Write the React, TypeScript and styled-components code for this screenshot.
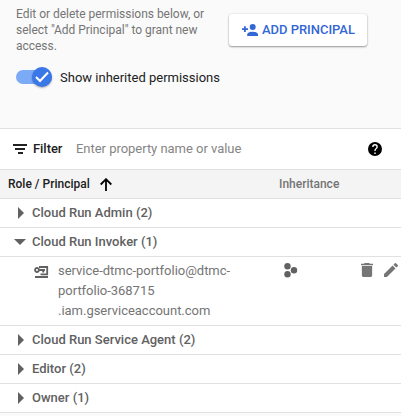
import React from "react";
import styled, { createGlobalStyle } from "styled-components";

const GlobalStyle = createGlobalStyle`
  * { box-sizing: border-box; }
  body { margin: 0; background: #fafafa; font-family: Roboto, "Liberation Sans", sans-serif; overflow: hidden; }
`;

const Page = styled.main`
  width: 401px;
  height: 416px;
  background: #fafafa;
  overflow: hidden;
`;

const Header = styled.header`
  display: flex;
  height: 128px;
  padding: 6px 0 0 16px;
`;

const Intro = styled.div`
  width: 212px;
`;

const Description = styled.p`
  margin: 0;
  font-size: 12px;
  line-height: 16px;
  letter-spacing: -0.02px;
  color: #757575;
  white-space: nowrap;
`;

const ToggleRow = styled.label`
  display: flex;
  align-items: center;
  gap: 8px;
  height: 20px;
  margin-top: 13px;
  font-size: 13px;
  color: #212121;
  white-space: nowrap;
`;

const Track = styled.span`
  display: flex;
  align-items: center;
  justify-content: flex-end;
  flex: none;
  width: 36px;
  height: 14px;
  border-radius: 7px;
  background: #7baaf7;
`;

const Thumb = styled.span`
  display: flex;
  align-items: center;
  justify-content: center;
  width: 20px;
  height: 20px;
  border-radius: 50%;
  background: #3b78e7;
  box-shadow: 0 1px 2px rgba(0, 0, 0, 0.3);
`;

const AddButton = styled.button`
  display: flex;
  align-items: center;
  width: 138px;
  height: 32px;
  margin: 8px 0 0 1px;
  padding: 0 0 0 13px;
  gap: 4px;
  border: 0;
  border-radius: 3px;
  background: #fff;
  box-shadow: 0 1px 2px rgba(0, 0, 0, 0.38), 0 0 2px rgba(0, 0, 0, 0.12);
  color: #3367d6;
  font: 500 13px/16px Roboto, sans-serif;
  letter-spacing: -0.03px;
  white-space: nowrap;
`;

const FilterBar = styled.div`
  display: flex;
  align-items: center;
  height: 41px;
  padding: 0 19px 1px 13px;
  border-top: 1px solid #e0e0e0;
  background: #fff;
  font-size: 13px;
`;

const FilterLabel = styled.span`
  width: 43px;
  margin-left: 6px;
  font-weight: 500;
  letter-spacing: -0.05px;
  color: #212121;
`;

const Placeholder = styled.span`
  flex: 1;
  letter-spacing: -0.03px;
  color: #858585;
`;

const TableHead = styled.div`
  display: grid;
  grid-template-columns: 279px 1fr;
  align-items: center;
  height: 29px;
  border-top: 1px solid #e0e0e0;
  background: #f4f4f4;
  font-size: 12px;
  font-weight: 500;
  color: #757575;
`;

const SortedHeading = styled.span`
  display: flex;
  align-items: center;
  gap: 10px;
  padding-left: 8px;
  color: #212121;
`;

const Group = styled.div`
  display: flex;
  align-items: center;
  height: 29px;
  padding-bottom: 1px;
  border-top: 1px solid #e0e0e0;
  background: #fff;
  font-size: 13px;
  font-weight: 500;
  color: #616161;
`;

const Caret = styled.span<{ $open: boolean }>`
  display: flex;
  justify-content: center;
  width: 12px;
  margin: 0 6px 0 14px;
  padding-left: ${(p) => (p.$open ? 0 : 2)}px;
`;

const Member = styled.div`
  display: flex;
  align-items: flex-start;
  height: 69px;
  padding: 4px 0 0 34px;
  border-top: 1px solid #e0e0e0;
  background: #fff;
`;

const Email = styled.div`
  width: 226px;
  margin-left: 9px;
  font-size: 13px;
  line-height: 20px;
  letter-spacing: -0.02px;
  color: #757575;
`;

const Icon = styled.svg<{ $top?: number }>`
  display: block;
  flex: none;
  margin-top: ${(p) => p.$top ?? 0}px;
`;

const Actions = styled.div`
  display: flex;
  gap: 11px;
  margin-left: 63px;
`;

const Footer = styled.footer`
  height: 4px;
  border-top: 1px solid #e0e0e0;
  background: #fafafa;
`;

function RoleGroup({ name, count, open = false }: { name: string; count: number; open?: boolean }) {
  return (
    <Group>
      <Caret $open={open}>
        {open ? (
          <Icon width="12" height="6" viewBox="0 0 12 6"><path d="M0 0h12L6 6z" fill="#616161" /></Icon>
        ) : (
          <Icon width="6" height="12" viewBox="0 0 6 12"><path d="M0 0v12l6-6z" fill="#616161" /></Icon>
        )}
      </Caret>
      {name} ({count})
    </Group>
  );
}

export default function App() {
  return (
    <Page>
      <GlobalStyle />
      <Header>
        <Intro>
          <Description>
            Edit or delete permissions below, or<br />select "Add Principal" to grant new<br />access.
          </Description>
          <ToggleRow>
            <Track>
              <Thumb>
                <Icon width="14" height="12" viewBox="0 0 14 12"><path d="M1 6l4 4 8-8.5" fill="none" stroke="#fff" strokeWidth="2" /></Icon>
              </Thumb>
            </Track>
            Show inherited permissions
          </ToggleRow>
        </Intro>
        <AddButton>
          <Icon width="16" height="12" viewBox="0 0 16 12" fill="#3367d6">
            <circle cx="10.7" cy="3" r="3" />
            <path d="M5.2 12v-1.5C5.2 8.5 8.8 7.8 10.7 7.8S16 8.5 16 10.5V12zM2 2.2h1.8v2H6v1.8H3.8V8H2V6H0V4.2h2z" />
          </Icon>
          ADD PRINCIPAL
        </AddButton>
      </Header>
      <FilterBar>
        <Icon width="14" height="10" viewBox="0 0 14 10"><path d="M0 0h14v2H0zM2 4h10v2H2zM5 8h5v2H5z" fill="#212121" /></Icon>
        <FilterLabel>Filter</FilterLabel>
        <Placeholder>Enter property name or value</Placeholder>
        <Icon width="14" height="14" viewBox="2 2 20 20"><path d="M12 2a10 10 0 100 20 10 10 0 000-20zm1 17h-2v-2h2zm2.07-7.75l-.9.92C13.45 12.9 13 13.5 13 15h-2v-.5c0-1.1.45-2.1 1.17-2.83l1.24-1.26A2 2 0 1010 9H8a4 4 0 118 0c0 .88-.36 1.68-.93 2.25z" fill="#000" /></Icon>
      </FilterBar>
      <TableHead>
        <SortedHeading>
          Role / Principal
          <Icon width="12" height="13" viewBox="0 0 12 13"><path d="M6 13V1.5M.7 6.5L6 1.2l5.3 5.3" fill="none" stroke="#000" strokeWidth="1.8" /></Icon>
        </SortedHeading>
        <span>Inheritance</span>
      </TableHead>
      <RoleGroup name="Cloud Run Admin" count={2} />
      <RoleGroup name="Cloud Run Invoker" count={1} open />
      <Member>
        <Icon $top={5} width="15" height="12" viewBox="0 0 15 12" fill="none" stroke="#616161">
          <circle cx="3" cy="4" r="2" strokeWidth="1.8" />
          <path d="M5 4h6M9.2 4v2.5" strokeWidth="2" />
          <path d="M5 1h8.2v7.4H6.5M1 11h13" strokeWidth="1.8" />
        </Icon>
        <Email>service-dtmc-portfolio@dtmc-<br />portfolio-368715<br />.iam.gserviceaccount.com</Email>
        <Icon $top={2} width="14" height="15" viewBox="0 0 14 15" fill="#616161">
          <circle cx="3.5" cy="3.3" r="3.2" /><circle cx="10" cy="7.2" r="3.2" /><circle cx="3.5" cy="11.3" r="3.2" />
        </Icon>
        <Actions>
          <Icon $top={2} width="12" height="14" viewBox="5 3 14 18" preserveAspectRatio="none" fill="#757575"><path d="M6 19c0 1.1.9 2 2 2h8c1.1 0 2-.9 2-2V7H6zM19 4h-3.5l-1-1h-5l-1 1H5v2h14z" /></Icon>
          <Icon $top={2} width="14" height="14" viewBox="3 3 18 18" fill="#757575"><path d="M3 17.25V21h3.75L17.8 9.94l-3.75-3.75zM20.7 7.04a1 1 0 000-1.41L18.37 3.3a1 1 0 00-1.41 0l-1.83 1.83 3.75 3.75z" /></Icon>
        </Actions>
      </Member>
      <RoleGroup name="Cloud Run Service Agent" count={2} />
      <RoleGroup name="Editor" count={2} />
      <RoleGroup name="Owner" count={1} />
      <Footer />
    </Page>
  );
}
